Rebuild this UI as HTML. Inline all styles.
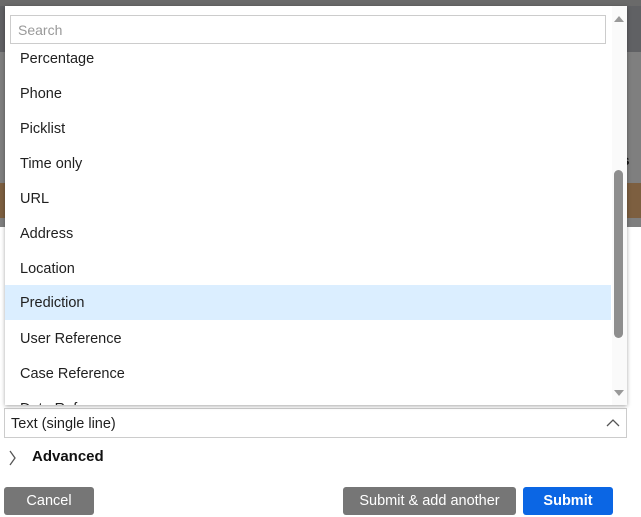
<!DOCTYPE html>
<html><head><style>
body{margin:0;width:641px;height:517px;position:relative;overflow:hidden;background:#fff;font-family:"Liberation Sans",sans-serif;}
.a{position:absolute}
.it{position:absolute;left:5px;width:606px;height:35px;line-height:36px;padding-left:15px;box-sizing:border-box;font-size:14.5px;color:#1f1f1f}
</style></head><body>
<div class="a" style="left:0;top:0;width:641px;height:6px;background:#6a6a6a"></div>
<div class="a" style="left:0;top:6px;width:641px;height:46px;background:#606164"></div>
<div class="a" style="left:0;top:52px;width:641px;height:131px;background:#7f7f7f"></div>
<div class="a" style="left:0;top:183px;width:641px;height:35px;background:#7d5f40"></div>
<div class="a" style="left:0;top:218px;width:641px;height:9px;background:#7f7f7f"></div>
<div class="a" style="left:614px;top:152px;font-size:14px;font-weight:bold;color:#111">as</div>

<div class="a" style="left:4px;top:408px;width:623px;height:30px;border:1px solid #ccc;font-size:14.5px;line-height:31px;padding-left:6px;box-sizing:border-box;color:#1f1f1f">Text (single line)</div>
<svg class="a" style="left:606px;top:418px" width="14" height="10"><path d="M1 8 L7 2 L13 8" fill="none" stroke="#555" stroke-width="1.3"/></svg>
<svg class="a" style="left:8px;top:449px" width="10" height="18"><path d="M2 2 L7 9 L2 16" fill="none" stroke="#555" stroke-width="1.3"/></svg>
<div class="a" style="left:32px;top:448px;font-size:15px;font-weight:bold;color:#111">Advanced</div>
<div class="a" style="left:4px;top:487px;width:90px;height:28px;background:#767676;border-radius:3px;color:#fff;font-size:14.5px;line-height:28px;text-align:center">Cancel</div>
<div class="a" style="left:343px;top:487px;width:173px;height:28px;background:#767676;border-radius:3px;color:#fff;font-size:14.5px;line-height:28px;text-align:center">Submit &amp; add another</div>
<div class="a" style="left:523px;top:487px;width:90px;height:28px;background:#0b66e4;border-radius:3px;color:#fff;font-size:14.5px;font-weight:bold;line-height:28px;text-align:center">Submit</div>

<div class="a" style="left:5px;top:6px;width:622px;height:399px;background:#fff;box-shadow:0 1px 4px rgba(0,0,0,.35);overflow:hidden">
<div class="a" style="left:5px;top:9px;width:596px;height:29px;box-sizing:border-box;border:1px solid #ccc;font-size:14px;line-height:28px;padding-left:7px;color:#999">Search</div>
<div class="a" style="left:607px;top:0;width:15px;height:399px;background:#fafafa"></div>
<div class="a" style="left:609px;top:164px;width:9px;height:168px;background:#8e8e8e;border-radius:5px"></div>
<svg class="a" style="left:608px;top:8px" width="12" height="10"><path d="M1 8 L6 2 L11 8Z" fill="#999"/></svg>
<svg class="a" style="left:608px;top:382px" width="12" height="10"><path d="M1 2 L6 8 L11 2Z" fill="#999"/></svg>
</div>
<div class="it" style="top:41px">Percentage</div>
<div class="it" style="top:76px">Phone</div>
<div class="it" style="top:111px">Picklist</div>
<div class="it" style="top:146px">Time only</div>
<div class="it" style="top:181px">URL</div>
<div class="it" style="top:216px">Address</div>
<div class="it" style="top:251px">Location</div>
<div class="it" style="top:285px;background:#dbeeff;line-height:37px">Prediction</div>
<div class="it" style="top:321px">User Reference</div>
<div class="it" style="top:356px">Case Reference</div>
<div class="a" style="left:5px;top:398px;width:606px;height:7px;overflow:hidden"><div style="padding-left:15px;font-size:14.5px;line-height:20px;margin-top:1px;color:#1f1f1f">Data Reference</div></div>
</body></html>
